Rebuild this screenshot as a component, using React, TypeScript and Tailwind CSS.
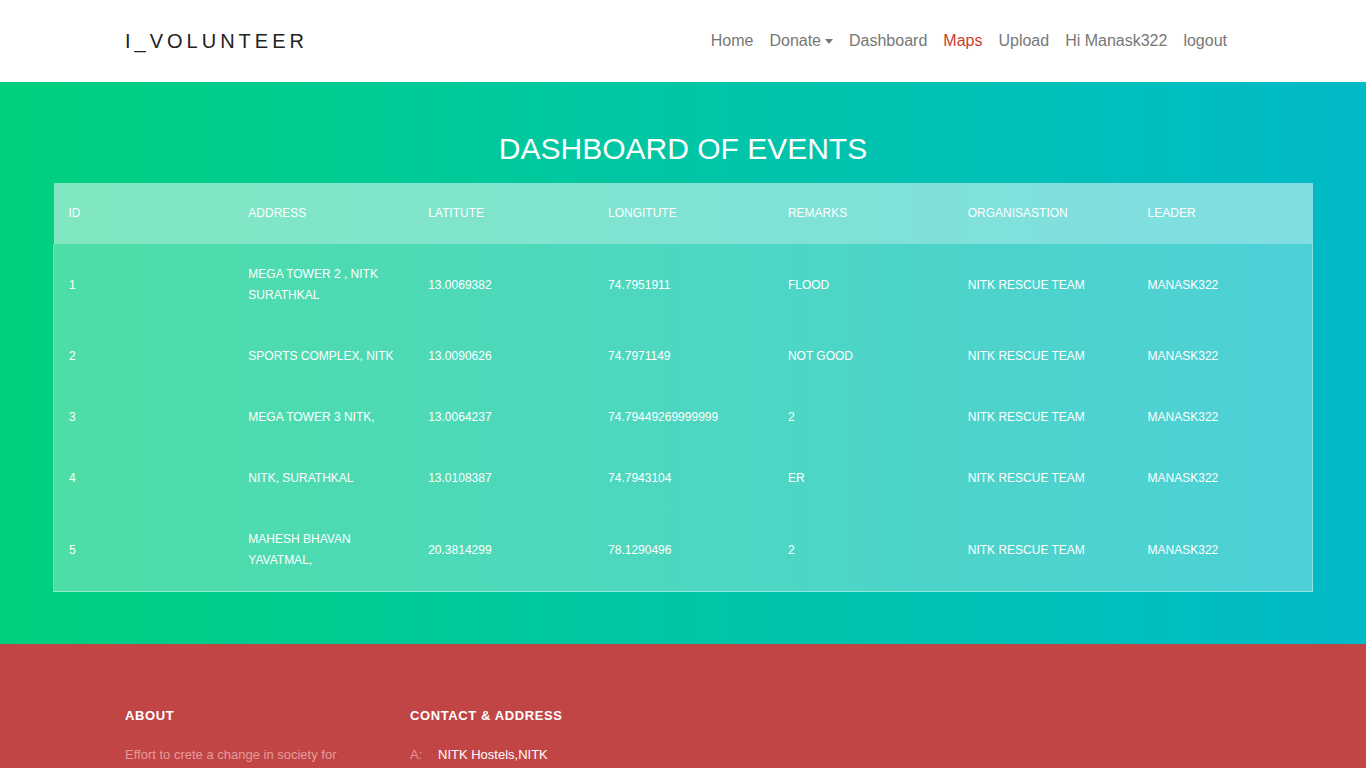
import { useState } from "react";

const events = [
  { id: 1, address: "MEGA TOWER 2 , NITK SURATHKAL", lat: "13.0069382", lng: "74.7951911", remarks: "FLOOD" },
  { id: 2, address: "SPORTS COMPLEX, NITK", lat: "13.0090626", lng: "74.7971149", remarks: "NOT GOOD" },
  { id: 3, address: "MEGA TOWER 3 NITK,", lat: "13.0064237", lng: "74.79449269999999", remarks: "2" },
  { id: 4, address: "NITK, SURATHKAL", lat: "13.0108387", lng: "74.7943104", remarks: "ER" },
  { id: 5, address: "MAHESH BHAVAN YAVATMAL,", lat: "20.3814299", lng: "78.1290496", remarks: "2" },
];

const headers = ["ID", "ADDRESS", "LATITUTE", "LONGITUTE", "REMARKS", "ORGANISASTION", "LEADER"];

function Navbar() {
  const [active] = useState("Maps");
  const links = ["Home", "Donate", "Dashboard", "Maps", "Upload", "Hi Manask322", "logout"];
  return (
    <nav className="h-[82px] bg-white flex items-center justify-between pl-[125px] pr-[139px]">
      <a href="#" className="text-[20px] tracking-[4px] text-[#222] leading-none">
        I_VOLUNTEER
      </a>
      <div className="flex items-center gap-[16px] text-[16px]">
        {links.map((l) => (
          <a
            key={l}
            href="#"
            className={`flex items-center ${l === active ? "text-[#d03b2f]" : "text-[#777]"}`}
          >
            {l}
            {l === "Donate" && (
              <span className="ml-[4px] mt-[1px] border-t-[5px] border-x-[4.5px] border-t-[#777] border-x-transparent" />
            )}
          </a>
        ))}
      </div>
    </nav>
  );
}

function EventsTable() {
  return (
    <table className="w-[1260px] mx-auto table-fixed border-collapse text-[12px] text-white">
      <thead>
        <tr className="bg-white/50">
          {headers.map((h) => (
            <th key={h} className="text-left font-normal px-[15px] h-[61px] leading-[21px]">
              {h}
            </th>
          ))}
        </tr>
      </thead>
      <tbody className="bg-white/30 border border-white/40 border-t-0">
        {events.map((e) => (
          <tr key={e.id}>
            <td className="px-[15px] py-[20px] leading-[21px] align-middle">{e.id}</td>
            <td className="px-[15px] py-[20px] leading-[21px] align-middle">{e.address}</td>
            <td className="px-[15px] py-[20px] leading-[21px] align-middle">{e.lat}</td>
            <td className="px-[15px] py-[20px] leading-[21px] align-middle">{e.lng}</td>
            <td className="px-[15px] py-[20px] leading-[21px] align-middle">{e.remarks}</td>
            <td className="px-[15px] py-[20px] leading-[21px] align-middle">NITK RESCUE TEAM</td>
            <td className="px-[15px] py-[20px] leading-[21px] align-middle">MANASK322</td>
          </tr>
        ))}
      </tbody>
    </table>
  );
}

export default function App() {
  return (
    <div className="font-['Liberation_Sans',Arial,sans-serif]">
      <Navbar />
      <section className="bg-gradient-to-r from-[#00d07d] to-[#00bac8] pt-[49px] pb-[52px]">
        <h1 className="text-center text-white text-[30px] leading-[36px] font-light mb-[16px]">
          DASHBOARD OF EVENTS
        </h1>
        <EventsTable />
      </section>
      <footer className="bg-[#c14545] pt-[64px] pb-[80px]">
        <div className="flex pl-[125px]">
          <div className="w-[285px]">
            <h3 className="text-white font-bold text-[13px] tracking-[0.6px] leading-[16px]">ABOUT</h3>
            <p className="mt-[20px] text-[#e59b9b] text-[13px] leading-[22px] w-[230px]">
              Effort to crete a change in society for better tomorrow and helping hands for the needy.
            </p>
          </div>
          <div>
            <h3 className="text-white font-bold text-[13px] tracking-[0.6px] leading-[16px]">CONTACT &amp; ADDRESS</h3>
            <ul className="mt-[20px] text-[13px] leading-[22px]">
              <li className="flex">
                <span className="w-[28px] text-[#e59b9b]">A:</span>
                <span className="text-white">NITK Hostels,NITK</span>
              </li>
              <li className="flex">
                <span className="w-[28px]"></span>
                <span className="text-white">Surathkal, Karnataka</span>
              </li>
              <li className="flex mt-[10px]">
                <span className="w-[28px] text-[#e59b9b]">P:</span>
                <span className="text-white">+91 9876543210</span>
              </li>
              <li className="flex">
                <span className="w-[28px] text-[#e59b9b]">E:</span>
                <span className="text-white">ivolunteer@nitk.edu.in</span>
              </li>
            </ul>
          </div>
        </div>
      </footer>
    </div>
  );
}
